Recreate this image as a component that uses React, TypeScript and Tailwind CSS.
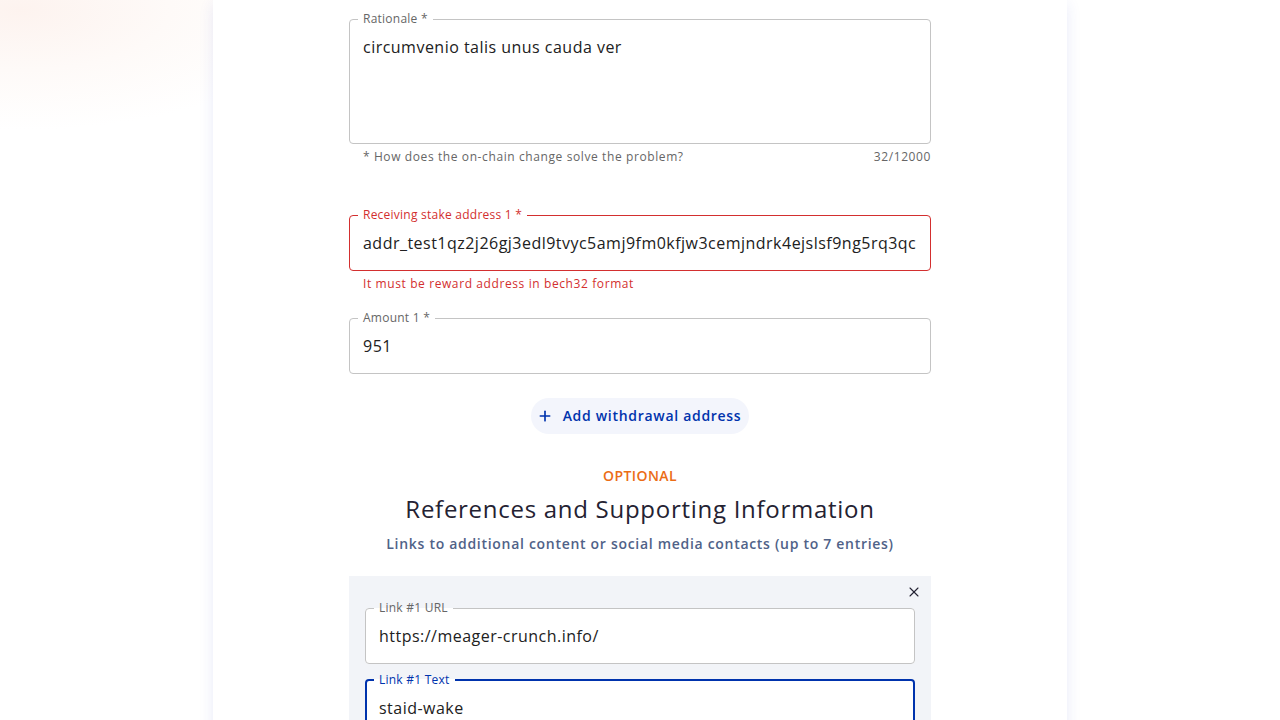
import { Plus, X } from 'lucide-react'

type FieldProps = {
  label: string
  value: string
  tone?: 'default' | 'error' | 'focus'
  multiline?: boolean
}

function OutlinedField({ label, value, tone = 'default', multiline }: FieldProps) {
  const border =
    tone === 'error'
      ? 'border border-[#d32f2f]'
      : tone === 'focus'
        ? 'border-2 border-[#0033ad]'
        : 'border border-[#c4c4c4]'
  const legend =
    tone === 'error' ? 'text-[#d32f2f]' : tone === 'focus' ? 'text-[#0033ad]' : 'text-[#666666]'

  return (
    <fieldset className={`rounded-[4px] bg-white ${border} ${tone === 'focus' ? 'px-[12px]' : 'px-[13px]'}`}>
      <legend className={`-ml-[5px] px-[5px] text-xs leading-4 tracking-[0.02em] ${legend}`}>{label}</legend>
      {multiline ? (
        <textarea
          readOnly
          value={value}
          className="block h-[116px] w-full resize-none bg-transparent pt-2 pb-2 text-base leading-6 tracking-[0.03em] text-[#212121] outline-none"
        />
      ) : (
        <input
          readOnly
          value={value}
          className="block w-full bg-transparent pt-2 pb-[15px] text-base leading-6 tracking-[0.03em] text-[#212121] outline-none"
        />
      )}
    </fieldset>
  )
}

export default function App() {
  return (
    <div className="min-h-screen w-full bg-[radial-gradient(ellipse_300px_120px_at_20px_10px,#fdf3ef_0%,#fefaf8_50%,#ffffff_100%)] font-['Open_Sans',sans-serif]">
      <div className="mx-auto w-[854px] bg-white px-[136px] pt-[11px] pb-10 shadow-[0_4px_14px_rgba(40,60,200,0.10)]">
        <OutlinedField label="Rationale *" value="circumvenio talis unus cauda ver" multiline />
        <div className="mt-[3px] flex justify-between pl-[14px] text-xs leading-5 tracking-[0.05em] text-[#666666]">
          <span>* How does the on-chain change solve the problem?</span>
          <span>32/12000</span>
        </div>

        <div className="mt-10">
          <OutlinedField
            label="Receiving stake address 1 *"
            value="addr_test1qz2j26gj3edl9tvyc5amj9fm0kfjw3cemjndrk4ejslsf9ng5rq3qc"
            tone="error"
          />
          <p className="mt-[3px] px-[14px] text-xs leading-5 tracking-[0.05em] text-[#d32f2f]">
            It must be reward address in bech32 format
          </p>
        </div>

        <div className="mt-4">
          <OutlinedField label="Amount 1 *" value="951" />
        </div>

        <div className="mt-6 flex justify-center">
          <button className="flex h-9 items-center gap-2.5 rounded-full bg-[#f3f5fc] pr-2 pl-1.5 text-sm font-semibold tracking-[0.05em] text-[#0033ad]">
            <Plus size={16} strokeWidth={2.5} />
            Add withdrawal address
          </button>
        </div>

        <p className="mt-8 text-center text-sm leading-5 font-semibold tracking-[0.03em] text-[#eb6d16]">OPTIONAL</p>
        <h2 className="mt-[7px] text-center text-2xl leading-8 tracking-[0.03em] text-[#242232]">
          References and Supporting Information
        </h2>
        <p className="mt-[9px] text-center text-sm leading-5 font-semibold tracking-[0.05em] text-[#506288]">
          Links to additional content or social media contacts (up to 7 entries)
        </p>

        <div className="relative mt-[22px] flex flex-col gap-2 bg-[#f2f4f8] px-4 pt-6 pb-4">
          <button className="absolute top-[6px] right-[7px] flex h-5 w-5 items-center justify-center text-[#242232]">
            <X size={16} strokeWidth={1.6} />
          </button>
          <OutlinedField label="Link #1 URL" value="https://meager-crunch.info/" />
          <OutlinedField label="Link #1 Text" value="staid-wake" tone="focus" />
        </div>
      </div>
    </div>
  )
}
